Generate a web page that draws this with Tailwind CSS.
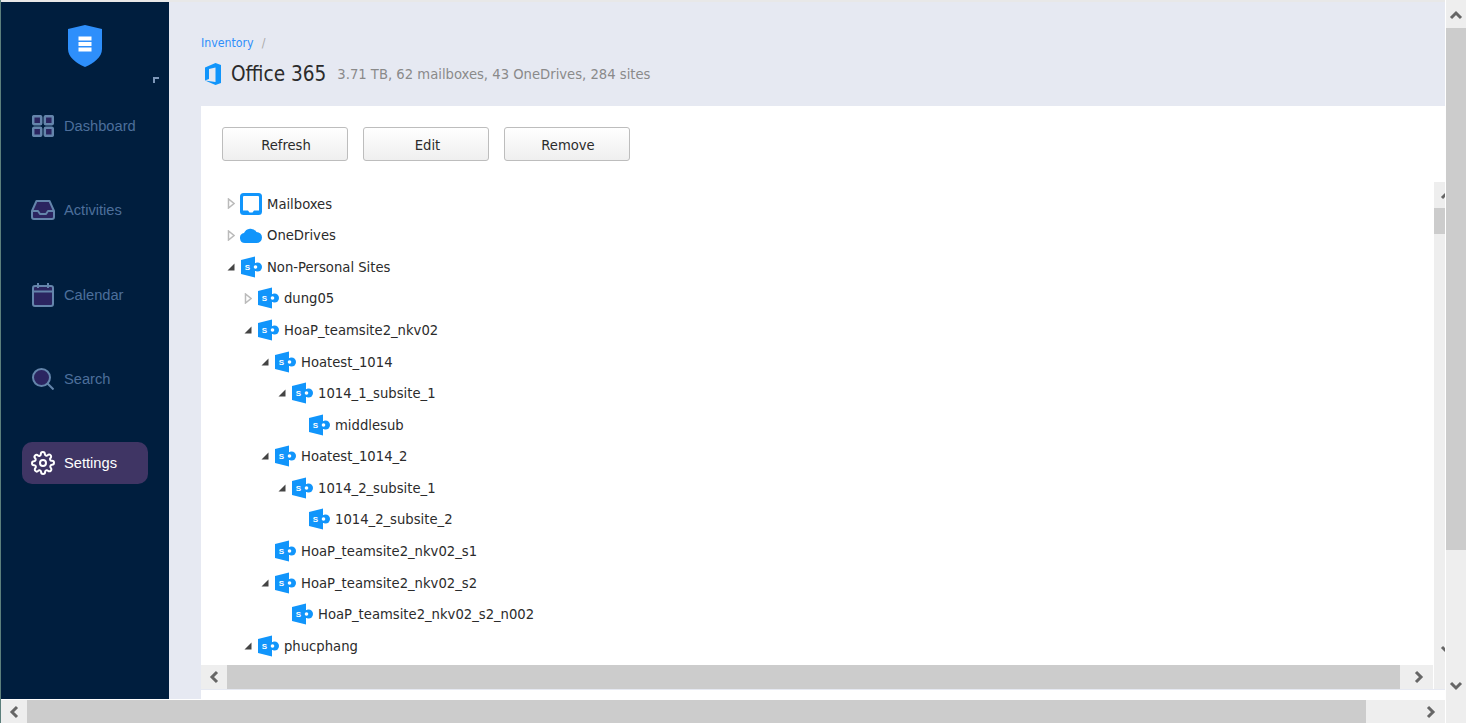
<!DOCTYPE html>
<html lang="en">
  <head>
    <meta charset="UTF-8" />
    <title>Office 365 - Inventory</title>
    <script src="https://cdn.jsdelivr.net/npm/@tailwindcss/browser@4"></script>
  </head>
  <body class="w-[1466px] h-[723px] overflow-hidden bg-white flex font-['DejaVu_Sans_Condensed','Noto_Sans',sans-serif] text-[14.670px] text-[#2b2b2b]">
    <!-- shared icons -->
    <svg class="hidden">
      <symbol id="sp" viewBox="0 0 22 22">
        <path d="M1 4 15 .500v21L1 18z" fill="#1195fb" />
        <circle cx="17.500" cy="11" r="4.500" fill="#1195fb" />
        <circle cx="15.500" cy="11" r="1.800" fill="#fff" />
        <path d="M15 4.500h1v2.500h-1zM15 15h1v2.500h-1z" fill="#fff" />
        <text x="7.500" y="13.800" text-anchor="middle" font-family="Liberation Sans" font-weight="700" font-size="8" fill="#fff">S</text>
      </symbol>
      <symbol id="open" viewBox="0 0 8 8"><path d="M7.500 .5v7H.5z" fill="#444" /></symbol>
      <symbol id="closed" viewBox="0 0 8 11"><path d="M1.500 1v9L7 5.500z" fill="#fff" stroke="#bbb" stroke-width="1.500" /></symbol>
      <symbol id="chev-up" viewBox="0 0 14 14"><path d="M2 10l5-5 5 5" fill="none" stroke="#666" stroke-width="3" /></symbol>
      <symbol id="chev-down" viewBox="0 0 14 14"><path d="M2 4l5 5 5-5" fill="none" stroke="#666" stroke-width="3" /></symbol>
      <symbol id="chev-left" viewBox="0 0 14 14"><path d="M10 2 5 7l5 5" fill="none" stroke="#666" stroke-width="3" /></symbol>
      <symbol id="chev-right" viewBox="0 0 14 14"><path d="M4 2l5 5-5 5" fill="none" stroke="#666" stroke-width="3" /></symbol>
    </svg>

    <div class="w-[1445px] h-full shrink-0 flex flex-col border-l border-[#5c7f7c]">
      <div class="h-[2px] bg-[#e8e8e8]"></div>
      <div class="flex h-[697px]">
        <!-- sidebar -->
        <aside class="w-[168px] shrink-0 bg-[#001e3e] flex flex-col font-['Liberation_Sans',sans-serif] text-[#4d6f9b]">
          <div class="h-[103px] relative flex justify-center pt-[23px] pr-[1px]">
            <svg width="34" height="42" viewBox="0 0 34 42">
              <path d="M17 0 34 4v20c0 8-8 14-17 18C8 38 0 32 0 24V4z" fill="#2e8ffb" />
              <rect x="10.500" y="11.500" width="13" height="4" fill="#fff" />
              <rect x="10.500" y="17" width="13" height="4" fill="#fff" />
              <rect x="10.500" y="22.500" width="13" height="4" fill="#fff" />
            </svg>
            <span class="absolute left-[152px] top-[75px] w-[6px] h-[6px] border-l-[2px] border-t-[2px] border-[#7d97b8]"></span>
          </div>
          <nav class="flex flex-col gap-[42.250px] px-[21px]">
            <a class="h-[42px] flex items-center gap-[10px] pl-[10px]">
              <svg width="22" height="22" viewBox="0 0 22 22" fill="#2b2560" stroke="#6485ab" stroke-width="2.500">
                <rect x="1.200" y="1.200" width="8" height="8" rx="1" /><rect x="12.800" y="1.200" width="8" height="8" rx="1" />
                <rect x="1.200" y="12.800" width="8" height="8" rx="1" /><rect x="12.800" y="12.800" width="8" height="8" rx="1" />
              </svg>
              Dashboard
            </a>
            <a class="h-[42px] flex items-center gap-[9px] pl-[9px]">
              <svg width="24" height="20" viewBox="0 0 24 20" fill="#2b2560" stroke="#6485ab" stroke-width="2" stroke-linejoin="round">
                <path d="M5.500 1h13L23 11v6a2 2 0 0 1-2 2H3a2 2 0 0 1-2-2v-6z" />
                <path d="M1 11h6l2 3h6l2-3h6" fill="none" />
              </svg>
              Activities
            </a>
            <a class="h-[42px] flex items-center gap-[10px] pl-[10px] pt-[1px]">
              <svg width="22" height="24" viewBox="0 0 22 24" fill="#2b2560" stroke="#6485ab" stroke-width="2">
                <rect x="1" y="3" width="20" height="20" rx="2" />
                <path d="M1 8.500h20M6 0v5M16 0v5" fill="none" />
              </svg>
              Calendar
            </a>
            <a class="h-[42px] flex items-center gap-[10px] pl-[10px] pt-[1px]">
              <svg width="22" height="22" viewBox="0 0 22 22" fill="#2b2560" stroke="#6485ab" stroke-width="2">
                <circle cx="9.500" cy="9.500" r="8.500" />
                <path d="M15.500 15.500 21.500 21.500" fill="none" />
              </svg>
              Search
            </a>
            <a class="h-[42px] flex items-center gap-[9px] pl-[9px] rounded-[10px] bg-[#3f3564] text-white">
              <svg width="24" height="24" viewBox="0 0 24 24" fill="none" stroke="#fff" stroke-width="2" stroke-linejoin="round">
                <circle cx="12" cy="12" r="3" />
                <path d="M19.400 15a1.650 1.650 0 0 0 .33 1.820l.06.06a2 2 0 1 1-2.830 2.830l-.06-.06a1.650 1.650 0 0 0-2.800 1.170V21a2 2 0 0 1-4 0v-.09a1.650 1.650 0 0 0-2.830-1.110l-.06.06a2 2 0 1 1-2.830-2.830l.06-.06a1.650 1.650 0 0 0-1.170-2.800H3a2 2 0 0 1 0-4h.09a1.650 1.650 0 0 0 1.110-2.830l-.06-.06a2 2 0 1 1 2.830-2.830l.06.06a1.650 1.650 0 0 0 2.800-1.170V3a2 2 0 0 1 4 0v.09a1.650 1.650 0 0 0 2.830 1.110l.06-.06a2 2 0 1 1 2.830 2.830l-.06.06a1.650 1.650 0 0 0 1.170 2.800H21a2 2 0 0 1 0 4h-.09a1.650 1.650 0 0 0-1.510 1z" />
              </svg>
              Settings
            </a>
          </nav>
        </aside>

        <!-- main -->
        <main class="flex-1 min-w-0 bg-[#e6e9f2] pl-[32px] flex flex-col">
          <header class="h-[104px] shrink-0 pt-[33px]">
            <div class="h-[16px] flex items-center text-[12.250px] text-[#2f8ffb]">Inventory<span class="ml-[8px] text-[#aaa]">/</span></div>
            <div class="mt-[8px] h-[30px] flex items-center pl-[3px]">
              <svg width="18" height="22" viewBox="0 0 18 22">
                <path d="M1 4.500 11.500 0 17 2v18l-5.500 2L1 17.500l10.500 1.500V4.500L5 6v10l-4 1.500z" fill="#1195fb" />
              </svg>
              <span class="ml-[9px] text-[20.600px]">Office 365</span>
              <span class="ml-[11px] text-[#8a8a8a]">3.71 TB, 62 mailboxes, 43 OneDrives, 284 sites</span>
            </div>
          </header>

          <section class="flex-1 min-h-0 bg-white flex flex-col">
            <div class="h-[76px] shrink-0 pt-[21px] pl-[21px] flex items-start gap-[15px]">
              <button class="w-[126px] h-[34px] pl-[2px] pt-[1px] rounded-[3px] border border-[#bdbdbd] bg-linear-to-b from-white to-[#efefef]">Refresh</button>
              <button class="w-[126px] h-[34px] pl-[3px] pt-[1px] rounded-[3px] border border-[#bdbdbd] bg-linear-to-b from-white to-[#efefef]">Edit</button>
              <button class="w-[126px] h-[34px] pl-[2px] pt-[1px] rounded-[3px] border border-[#bdbdbd] bg-linear-to-b from-white to-[#efefef]">Remove</button>
            </div>

            <div class="h-[508px] shrink-0 flex gap-[1px] border-b border-[#e6e9f2]">
              <div class="w-[1232px] shrink-0 flex flex-col">
                <!-- tree -->
                <ul class="h-[483px] overflow-hidden pt-[6px] pl-[24px]">
                  <li class="h-[31.570px] flex items-center">
                    <svg class="w-[8px] h-[11px] mr-[5px] ml-[2px]"><use href="#closed" /></svg>
                    <svg class="mr-[5px]" width="22" height="22" viewBox="0 0 22 22"><rect width="22" height="22" rx="3.500" fill="#1195fb" /><path d="M4 3h14a1 1 0 0 1 1 1v13.500h-5l-1.500 2h-3l-1.500-2H3V4a1 1 0 0 1 1-1z" fill="#fff" /></svg>
                    Mailboxes
                  </li>
                  <li class="h-[31.570px] flex items-center">
                    <svg class="w-[8px] h-[11px] mr-[5px] ml-[2px]"><use href="#closed" /></svg>
                    <svg class="mr-[5px]" width="22" height="16" viewBox="0 0 22 16"><path d="M5 16a5 5 0 0 1-1-9.900A7 7 0 0 1 16.500 5 5.500 5.500 0 0 1 16.500 16z" fill="#1195fb" /></svg>
                    OneDrives
                  </li>
                  <li class="h-[31.570px] flex items-center">
                    <svg class="w-[8px] h-[8px] mr-[5px] ml-[2px]"><use href="#open" /></svg>
                    <svg class="mr-[5px] w-[22px] h-[22px]"><use href="#sp" /></svg>
                    Non-Personal Sites
                  </li>
                  <li class="h-[31.570px] flex items-center pl-[17px]">
                    <svg class="w-[8px] h-[11px] mr-[5px] ml-[2px]"><use href="#closed" /></svg>
                    <svg class="mr-[5px] w-[22px] h-[22px]"><use href="#sp" /></svg>
                    dung05
                  </li>
                  <li class="h-[31.570px] flex items-center pl-[17px]">
                    <svg class="w-[8px] h-[8px] mr-[5px] ml-[2px]"><use href="#open" /></svg>
                    <svg class="mr-[5px] w-[22px] h-[22px]"><use href="#sp" /></svg>
                    HoaP_teamsite2_nkv02
                  </li>
                  <li class="h-[31.570px] flex items-center pl-[34px]">
                    <svg class="w-[8px] h-[8px] mr-[5px] ml-[2px]"><use href="#open" /></svg>
                    <svg class="mr-[5px] w-[22px] h-[22px]"><use href="#sp" /></svg>
                    Hoatest_1014
                  </li>
                  <li class="h-[31.570px] flex items-center pl-[51px]">
                    <svg class="w-[8px] h-[8px] mr-[5px] ml-[2px]"><use href="#open" /></svg>
                    <svg class="mr-[5px] w-[22px] h-[22px]"><use href="#sp" /></svg>
                    1014_1_subsite_1
                  </li>
                  <li class="h-[31.570px] flex items-center pl-[83px]">
                    <svg class="mr-[5px] w-[22px] h-[22px]"><use href="#sp" /></svg>
                    middlesub
                  </li>
                  <li class="h-[31.570px] flex items-center pl-[34px]">
                    <svg class="w-[8px] h-[8px] mr-[5px] ml-[2px]"><use href="#open" /></svg>
                    <svg class="mr-[5px] w-[22px] h-[22px]"><use href="#sp" /></svg>
                    Hoatest_1014_2
                  </li>
                  <li class="h-[31.570px] flex items-center pl-[51px]">
                    <svg class="w-[8px] h-[8px] mr-[5px] ml-[2px]"><use href="#open" /></svg>
                    <svg class="mr-[5px] w-[22px] h-[22px]"><use href="#sp" /></svg>
                    1014_2_subsite_1
                  </li>
                  <li class="h-[31.570px] flex items-center pl-[83px]">
                    <svg class="mr-[5px] w-[22px] h-[22px]"><use href="#sp" /></svg>
                    1014_2_subsite_2
                  </li>
                  <li class="h-[31.570px] flex items-center pl-[49px]">
                    <svg class="mr-[5px] w-[22px] h-[22px]"><use href="#sp" /></svg>
                    HoaP_teamsite2_nkv02_s1
                  </li>
                  <li class="h-[31.570px] flex items-center pl-[34px]">
                    <svg class="w-[8px] h-[8px] mr-[5px] ml-[2px]"><use href="#open" /></svg>
                    <svg class="mr-[5px] w-[22px] h-[22px]"><use href="#sp" /></svg>
                    HoaP_teamsite2_nkv02_s2
                  </li>
                  <li class="h-[31.570px] flex items-center pl-[66px]">
                    <svg class="mr-[5px] w-[22px] h-[22px]"><use href="#sp" /></svg>
                    HoaP_teamsite2_nkv02_s2_n002
                  </li>
                  <li class="h-[31.570px] flex items-center pl-[17px]">
                    <svg class="w-[8px] h-[8px] mr-[5px] ml-[2px]"><use href="#open" /></svg>
                    <svg class="mr-[5px] w-[22px] h-[22px]"><use href="#sp" /></svg>
                    phucphang
                  </li>
                </ul>
                <!-- tree horizontal scrollbar -->
                <div class="h-[24px] flex bg-[#eee]">
                  <div class="w-[26px] flex items-center justify-center"><svg class="w-[14px] h-[14px]"><use href="#chev-left" /></svg></div>
                  <div class="w-[1173px] bg-[#ccc]"></div>
                  <div class="flex-1 flex items-center justify-center"><svg class="w-[14px] h-[14px] ml-[4px]"><use href="#chev-right" /></svg></div>
                </div>
              </div>
              <!-- tree vertical scrollbar, cut off by the panel edge -->
              <div class="w-[11px] bg-[#eee] flex flex-col overflow-hidden">
                <div class="h-[26px] shrink-0 flex items-center pl-[6px]"><svg class="w-[14px] h-[14px] shrink-0"><use href="#chev-up" /></svg></div>
                <div class="h-[26px] shrink-0 bg-[#ccc]"></div>
                <div class="h-[403px] shrink-0"></div>
                <div class="h-[26px] shrink-0 flex items-center pl-[6px]"><svg class="w-[14px] h-[14px] shrink-0"><use href="#chev-down" /></svg></div>
              </div>
            </div>
          </section>
        </main>
      </div>
      <div class="h-[1px] bg-white"></div>
      <!-- window horizontal scrollbar -->
      <div class="h-[23px] flex bg-[#eee]">
        <div class="w-[26px] flex items-center justify-center"><svg class="w-[14px] h-[14px]"><use href="#chev-left" /></svg></div>
        <div class="w-[1339px] bg-[#ccc]"></div>
        <div class="flex-1 flex items-center justify-end pr-[7px]"><svg class="w-[14px] h-[14px]"><use href="#chev-right" /></svg></div>
      </div>
    </div>

    <!-- window vertical scrollbar -->
    <div class="ml-[1px] w-[20px] h-full bg-[#eee] flex flex-col">
      <div class="h-[28px] flex items-center justify-center pt-[2px]"><svg class="w-[14px] h-[14px]"><use href="#chev-up" /></svg></div>
      <div class="h-[522px] bg-[#ccc]"></div>
      <div class="h-[123px]"></div>
      <div class="h-[26px] flex items-center justify-center"><svg class="w-[14px] h-[14px]"><use href="#chev-down" /></svg></div>
    </div>
  </body>
</html>
